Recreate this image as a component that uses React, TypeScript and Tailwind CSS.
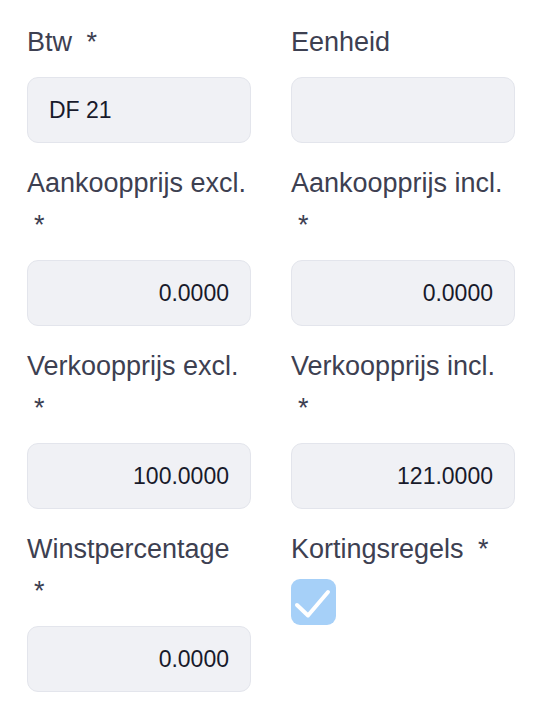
import React from "react";

const font = { fontFamily: '"Liberation Sans", Arial, Helvetica, sans-serif' };

function Label({ text, required }: { text: string; required?: boolean }) {
  return (
    <div className="text-[27px] leading-[42px] text-[#3d4051] mb-[14px]">
      {text}
      {required ? " " : ""}
      {required && <span className="ml-[7px]">*</span>}
    </div>
  );
}

function Input({ value, right }: { value: string; right?: boolean }) {
  return (
    <div
      className={
        "h-[66px] w-full rounded-[11px] border-[1.5px] border-[#e3e5ec] bg-[#f0f1f5] px-[21px] flex items-center text-[23px] text-[#181a2b] " +
        (right ? "justify-end" : "justify-start")
      }
    >
      {value}
    </div>
  );
}

function Field({
  label,
  required,
  value,
  right,
}: {
  label: string;
  required?: boolean;
  value: string;
  right?: boolean;
}) {
  return (
    <div className="mb-[19px]">
      <Label text={label} required={required} />
      <Input value={value} right={right} />
    </div>
  );
}

export default function App() {
  return (
    <div className="min-h-[712px] bg-white pl-[27px] pr-[23px] pt-[21px]" style={font}>
      <div className="grid grid-cols-[224px_224px] gap-x-[40px]">
        <Field label="Btw" required value="DF 21" />
        <Field label="Eenheid" value="" />
        <Field label="Aankoopprijs excl." required value="0.0000" right />
        <Field label="Aankoopprijs incl." required value="0.0000" right />
        <Field label="Verkoopprijs excl." required value="100.0000" right />
        <Field label="Verkoopprijs incl." required value="121.0000" right />
        <Field label="Winstpercentage" required value="0.0000" right />
        <div>
          <div className="text-[27px] leading-[42px] text-[#3d4051] mb-[9px]">
            Kortingsregels <span className="ml-[7px]">*</span>
          </div>
          <div className="w-[45px] h-[46px] rounded-[9px] bg-[#a6d0f8] flex items-center justify-center">
            <svg width="45" height="46" viewBox="0 0 45 46">
              <path
                d="M6 26 L17 36.5 L37 13"
                fill="none"
                stroke="white"
                strokeWidth="4"
                strokeLinecap="round"
                strokeLinejoin="round"
              />
            </svg>
          </div>
        </div>
      </div>
    </div>
  );
}
